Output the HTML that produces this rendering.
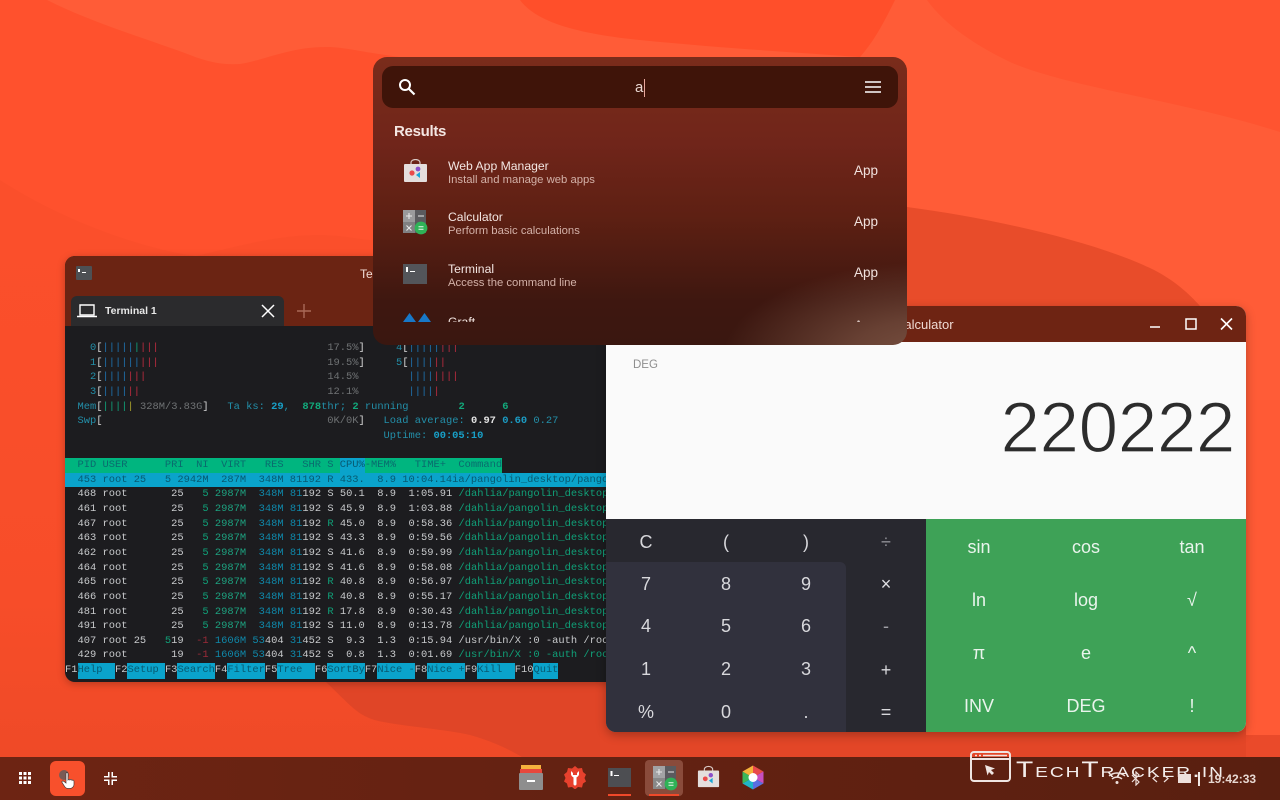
<!DOCTYPE html>
<html><head><meta charset="utf-8"><title>Desktop</title>
<style>
*{box-sizing:border-box}
html,body{margin:0;padding:0;width:1280px;height:800px;overflow:hidden;background:#ff512d}
body{position:relative;font-family:"Liberation Sans",sans-serif}
.a{position:absolute}
#term{left:65px;top:256px;width:560px;height:426px;border-radius:10px;overflow:hidden;background:#1c1c1f;box-shadow:0 2px 8px rgba(0,0,0,.25)}
#tbar{left:0;top:0;width:100%;height:70px;background:#6b2413}
#tab{left:6px;top:40px;width:213px;height:30px;background:#2b2b2d;border-radius:6px 6px 0 0}
#ht{left:0;top:85px;width:541px;height:341px;overflow:hidden;font:10.42px/14.65px "Liberation Mono",monospace;color:#c8cacc}
#ht div{height:14.65px;white-space:pre}
.g{color:#10a078}.b{color:#0f88aa}.d{color:#238fa9}.r{color:#b92c3e}.u{color:#1e70ad}.y{color:#a8a02c}.w{color:#d6d6d6}.k{color:#0a5f66}.m{color:#6f7274}.h{color:#18a0c8;font-weight:bold}.gb{color:#12a97b;font-weight:bold}.dr{color:#9c2b38}.n{color:#1da17f}
.ib{display:inline-block;height:14.65px;vertical-align:top}
.f{display:inline-block;background:#0aa3cb;color:#075a72;height:16px;line-height:15px;vertical-align:top}
#lau{left:373px;top:57px;width:534px;height:288px;border-radius:14px;overflow:hidden;color:#fff;
background:radial-gradient(ellipse 210px 95px at 560px 300px,#7a5242 0,rgba(122,82,66,.7) 40%,rgba(122,82,66,0) 100%),linear-gradient(180deg,#7a2c1b 0,#70251a 30%,#5e2013 55%,#3e1710 85%,#3a1710 100%)}
#sb{left:9px;top:9px;width:516px;height:42px;border-radius:11px;background:#3f1409}
.t1{font-size:12.2px;color:#f3e6e2;left:75px;white-space:nowrap}
.t2{font-size:11.3px;color:#d3b1a8;left:75px;white-space:nowrap}
.app{left:481px;font-size:13.5px;color:#f1e2de}
#calc{left:606px;top:306px;width:640px;height:426px;border-radius:10px;overflow:hidden;background:#fafafa;box-shadow:0 3px 10px rgba(0,0,0,.28)}
.ck{position:absolute;width:60px;margin-left:-30px;text-align:center;color:#d8d8dc;font-size:18px;line-height:20px}
.sk{position:absolute;width:80px;margin-left:-40px;text-align:center;color:#e9f4ec;font-size:18px;line-height:20px}
#bar{left:0;top:757px;width:1280px;height:43px;background:linear-gradient(90deg,#6d2413 0,#652212 40%,#591f10 100%)}
</style></head>
<body>
<svg class="a" style="left:0;top:0" width="1280" height="800" viewBox="0 0 1280 800">
<defs><linearGradient id="lg" x1="0" y1="240" x2="0" y2="757" gradientUnits="userSpaceOnUse"><stop offset="0" stop-color="#fb4f2b"/><stop offset=".7" stop-color="#f74d29"/><stop offset="1" stop-color="#ef4a27"/></linearGradient></defs>
<rect width="1280" height="800" fill="#ff512d"/>
<path d="M47 0C90 22 150 40 190 55C210 63 225 65 240 64C265 60 290 47 326 47C345 47 360 52 400 57V400H1280V0Z" fill="#ff5c37"/>
<path d="M520 0C535 20 570 33 640 40C720 48 790 52 860 57C875 40 885 20 895 0Z" fill="#ff4f2a"/>
<path d="M927 0C945 25 975 45 1010 62C1070 88 1180 100 1280 132V0Z" fill="#ff5430"/>
<path d="M907 207C990 218 1090 240 1150 268C1175 280 1190 295 1200 306V420H600V207Z" fill="#e84c2a"/>
<rect x="1246" y="400" width="34" height="360" fill="#ff5a35"/>
<path d="M0 180C70 225 150 250 196 256C240 245 280 235 318 235C345 235 360 240 373 240L700 420V760H0Z" fill="url(#lg)"/>
<rect x="600" y="420" width="646" height="340" fill="#e84c2a"/>
<path d="M326 682C345 700 355 712 367 717C380 725 440 728 470 735C495 742 510 750 522 757H640V682Z" fill="#e04527"/>
<rect x="600" y="700" width="646" height="60" fill="#e34627"/>
<rect x="1246" y="735" width="34" height="25" fill="#ea4a2a"/>
</svg>

<div class="a" id="term">
 <div class="a" id="tbar"></div>
 <svg class="a" style="left:11px;top:10px" width="16" height="14" viewBox="0 0 16 14"><rect width="16" height="14" rx="1" fill="#4d5054"/><path d="M2 3h2v3H2zM6 6h4v1H6z" fill="#fff"/></svg>
 <div class="a" style="left:295px;top:11px;font-size:12px;color:#f0dcd6">Terminal</div>
 <div class="a" id="tab">
  <svg class="a" style="left:5px;top:6px" width="22" height="18" viewBox="0 0 22 18"><path d="M4 3h14v10H4z" fill="none" stroke="#fff" stroke-width="1.4"/><path d="M1 14.500h20" stroke="#fff" stroke-width="1.600"/></svg>
  <div class="a" style="left:34px;top:9px;font-size:10.5px;font-weight:bold;color:#e8e8e8">Terminal 1</div>
  <svg class="a" style="left:190px;top:8px" width="14" height="14" viewBox="0 0 14 14"><path d="M1 1l12 12M13 1L1 13" stroke="#fff" stroke-width="1.5"/></svg>
 </div>
 <svg class="a" style="left:232px;top:48px" width="14" height="14" viewBox="0 0 14 14"><path d="M7 0v14M0 7h14" stroke="#a96a58" stroke-width="1.4"/></svg>

 <div class="a" id="ht"><div>    <span class="d">0</span><span class="w">[</span><span class="u">|||||</span><span class="g">|</span><span class="r">|||</span>                           <span class="m">17.5%</span><span class="w">]</span>     <span class="d">4</span><span class="w">[</span><span class="u">|||||</span><span class="r">|||</span></div><div>    <span class="d">1</span><span class="w">[</span><span class="u">||||||</span><span class="r">|||</span>                           <span class="m">19.5%</span><span class="w">]</span>     <span class="d">5</span><span class="w">[</span><span class="u">||||</span><span class="r">||</span></div><div>    <span class="d">2</span><span class="w">[</span><span class="u">||||</span><span class="r">|||</span>                             <span class="m">14.5%</span>        <span class="u">||||</span><span class="r">||||</span></div><div>    <span class="d">3</span><span class="w">[</span><span class="u">||||</span><span class="r">||</span>                              <span class="m">12.1%</span>        <span class="u">||||</span><span class="r">|</span></div><div>  <span class="d">Mem</span><span class="w">[</span><span class="g">||||</span><span class="y">|</span> <span class="m">328M/3.83G</span><span class="w">]</span>   <span class="d">Ta ks: </span><span class="h">29</span><span class="d">, </span> <span class="gb">878</span><span class="d">thr; </span><span class="gb">2</span> <span class="d">running</span>        <span class="gb">2</span>      <span class="gb">6</span></div><div>  <span class="d">Swp</span><span class="w">[</span>                                    <span class="m">0K/0K</span><span class="w">]</span>   <span class="d">Load average: </span><b style="color:#e2e2e2">0.97</b> <b style="color:#1b9cc4">0.60</b> <span class="d">0.27</span></div><div>                                                   <span class="d">Uptime: </span><b style="color:#18a0c8">00:05:10</b></div><div> </div><div style="width:437px;background:#00b57f;color:#0a6a6e">  PID USER      PRI  NI  VIRT   RES   SHR S <span class="ib" style="background:#0aa3cb;color:#075a72">CPU%</span>-MEM%   TIME+  Command</div><div style="background:#0aa3cb;color:#075a72">  453 root 25   5 2942M  287M  348M 81192 R 433.  8.9 10:04.14ia/pangolin_desktop/pangolin</div><div>  468 root       25   <span class="g">5</span> <span class="n">2987M</span>  <span class="b">348M</span> <span class="b">81</span>192 S 50.1  8.9  1:05.91 <span class="g">/dahlia/pangolin_desktop/pan</span></div><div>  461 root       25   <span class="g">5</span> <span class="n">2987M</span>  <span class="b">348M</span> <span class="b">81</span>192 S 45.9  8.9  1:03.88 <span class="g">/dahlia/pangolin_desktop/pan</span></div><div>  467 root       25   <span class="g">5</span> <span class="n">2987M</span>  <span class="b">348M</span> <span class="b">81</span>192 <span class="g">R</span> 45.0  8.9  0:58.36 <span class="g">/dahlia/pangolin_desktop/pan</span></div><div>  463 root       25   <span class="g">5</span> <span class="n">2987M</span>  <span class="b">348M</span> <span class="b">81</span>192 S 43.3  8.9  0:59.56 <span class="g">/dahlia/pangolin_desktop/pan</span></div><div>  462 root       25   <span class="g">5</span> <span class="n">2987M</span>  <span class="b">348M</span> <span class="b">81</span>192 S 41.6  8.9  0:59.99 <span class="g">/dahlia/pangolin_desktop/pan</span></div><div>  464 root       25   <span class="g">5</span> <span class="n">2987M</span>  <span class="b">348M</span> <span class="b">81</span>192 S 41.6  8.9  0:58.08 <span class="g">/dahlia/pangolin_desktop/pan</span></div><div>  465 root       25   <span class="g">5</span> <span class="n">2987M</span>  <span class="b">348M</span> <span class="b">81</span>192 <span class="g">R</span> 40.8  8.9  0:56.97 <span class="g">/dahlia/pangolin_desktop/pan</span></div><div>  466 root       25   <span class="g">5</span> <span class="n">2987M</span>  <span class="b">348M</span> <span class="b">81</span>192 <span class="g">R</span> 40.8  8.9  0:55.17 <span class="g">/dahlia/pangolin_desktop/pan</span></div><div>  481 root       25   <span class="g">5</span> <span class="n">2987M</span>  <span class="b">348M</span> <span class="b">81</span>192 <span class="g">R</span> 17.8  8.9  0:30.43 <span class="g">/dahlia/pangolin_desktop/pan</span></div><div>  491 root       25   <span class="g">5</span> <span class="n">2987M</span>  <span class="b">348M</span> <span class="b">81</span>192 S 11.0  8.9  0:13.78 <span class="g">/dahlia/pangolin_desktop/pan</span></div><div>  407 root 25   <span class="g">5</span>19  <span class="dr">-1</span> <span class="b">1606M</span> <span class="b">53</span>404 <span class="b">31</span>452 S  9.3  1.3  0:15.94 /usr/bin/X :0 -auth /root/.X</div><div>  429 root       19  <span class="dr">-1</span> <span class="b">1606M</span> <span class="b">53</span>404 <span class="b">31</span>452 S  0.8  1.3  0:01.69 <span class="g">/usr/bin/X :0 -auth /root/.X</span></div><div>F1<span class="f">Help  </span>F2<span class="f">Setup </span>F3<span class="f">Search</span>F4<span class="f">Filter</span>F5<span class="f">Tree  </span>F6<span class="f">SortBy</span>F7<span class="f">Nice -</span>F8<span class="f">Nice +</span>F9<span class="f">Kill  </span>F10<span class="f">Quit</span></div></div>
</div>

<div class="a" id="calc">
 <div class="a" style="left:0;top:0;width:640px;height:36px;background:#6e2413"></div>
 <div class="a" style="left:289px;top:11px;font-size:13px;color:#efdad3">Calculator</div>
 <svg class="a" style="left:544px;top:11px" width="86" height="14" viewBox="0 0 86 14"><path d="M0 10h10" stroke="#fff" stroke-width="1.6"/><rect x="36" y="2" width="10" height="10" fill="none" stroke="#fff" stroke-width="1.5"/><path d="M71 1.500l11 11M82 1.500l-11 11" stroke="#fff" stroke-width="1.6"/></svg>
 <div class="a" style="left:27px;top:53px;font-size:11.5px;color:#8e8e8e">DEG</div>
 <div class="a" style="right:11px;top:80px;font-size:71px;line-height:86px;color:#2c2c2c;-webkit-text-stroke:1.3px #fafafa;letter-spacing:-.4px">220222</div>
 <div class="a" style="left:0;top:213px;width:320px;height:213px;background:#28282f"></div>
 <div class="a" style="left:0;top:256px;width:240px;height:170px;background:#31313d;border-radius:0 6px 0 0"></div>
 <div class="a" style="left:320px;top:213px;width:320px;height:213px;background:#3ea257"></div>
 <div class="ck" style="left:40px;top:226px">C</div><div class="ck" style="left:120px;top:226px">(</div><div class="ck" style="left:200px;top:226px">)</div><div class="ck" style="left:280px;top:226px;color:#8f8f96">÷</div>
 <div class="ck" style="left:40px;top:268px">7</div><div class="ck" style="left:120px;top:268px">8</div><div class="ck" style="left:200px;top:268px">9</div><div class="ck" style="left:280px;top:268px;color:#e0e0e4">×</div>
 <div class="ck" style="left:40px;top:310px">4</div><div class="ck" style="left:120px;top:310px">5</div><div class="ck" style="left:200px;top:310px">6</div><div class="ck" style="left:280px;top:310px;color:#a0a0a6">-</div>
 <div class="ck" style="left:40px;top:353px">1</div><div class="ck" style="left:120px;top:353px">2</div><div class="ck" style="left:200px;top:353px">3</div><div class="ck" style="left:280px;top:354px">+</div>
 <div class="ck" style="left:40px;top:396px">%</div><div class="ck" style="left:120px;top:396px">0</div><div class="ck" style="left:200px;top:396px">.</div><div class="ck" style="left:280px;top:396px">=</div>
 <div class="sk" style="left:373px;top:231px">sin</div><div class="sk" style="left:480px;top:231px">cos</div><div class="sk" style="left:586px;top:231px">tan</div>
 <div class="sk" style="left:373px;top:284px">ln</div><div class="sk" style="left:480px;top:284px">log</div><div class="sk" style="left:586px;top:284px">√</div>
 <div class="sk" style="left:373px;top:337px">π</div><div class="sk" style="left:480px;top:337px">e</div><div class="sk" style="left:586px;top:337px">^</div>
 <div class="sk" style="left:373px;top:390px">INV</div><div class="sk" style="left:480px;top:390px">DEG</div><div class="sk" style="left:586px;top:390px">!</div>
</div>

<div class="a" id="lau">
 <div class="a" id="sb">
  <svg class="a" style="left:15px;top:11px" width="20" height="20" viewBox="0 0 20 20"><circle cx="8" cy="8" r="5" fill="none" stroke="#fff" stroke-width="2"/><path d="M12 12l5.500 5.500" stroke="#fff" stroke-width="2.200"/></svg>
  <div class="a" style="left:253px;top:13px;font-size:15px;color:#e9d7d2">a</div>
  <div class="a" style="left:262px;top:13px;width:1px;height:18px;background:#e9a79c"></div>
  <svg class="a" style="left:482px;top:14px" width="18" height="14" viewBox="0 0 18 14"><path d="M1 2h16M1 7h16M1 12h16" stroke="#fff" stroke-width="1.6"/></svg>
 </div>
 <div class="a" style="left:21px;top:66px;font-size:15px;font-weight:bold;color:#f4e6e2;letter-spacing:-.3px">Results</div>

 <svg class="a" style="left:30px;top:102px" width="25" height="24" viewBox="0 0 25 24"><path d="M8 6V3.500a4.500 3 0 0 1 9 0V6" fill="none" stroke="#d8c8c4" stroke-width="1.200"/><rect x="1" y="5" width="23" height="18" rx="1" fill="#e4dedd"/><circle cx="9" cy="14" r="2.600" fill="#ea4a4a"/><circle cx="15" cy="10" r="2.400" fill="#8a4fc9"/><path d="M17 13v6l-4-3z" fill="#18a6d6"/></svg>
 <div class="a t1" style="top:102px">Web App Manager</div><div class="a t2" style="top:117px">Install and manage web apps</div><div class="a app" style="top:106px">App</div>

 <svg class="a" style="left:29px;top:152px" width="26" height="26" viewBox="0 0 26 26"><rect x="1" y="1" width="12" height="12" fill="#9a9a9c"/><rect x="13" y="1" width="11" height="12" fill="#5a5a5e"/><rect x="1" y="13" width="12" height="11" fill="#808082"/><rect x="13" y="13" width="11" height="11" fill="#5a5a5e"/><path d="M4 7h6M7 4v6M4.500 16.500l5 5M9.500 16.500l-5 5M16 7h6" stroke="#e8e8e8" stroke-width="1.100"/><circle cx="19" cy="19" r="6.400" fill="#2fb357"/><path d="M16.500 17.800h5M16.500 20.200h5" stroke="#e8f6ec" stroke-width="1"/></svg>
 <div class="a t1" style="top:153px">Calculator</div><div class="a t2" style="top:168px">Perform basic calculations</div><div class="a app" style="top:157px">App</div>

 <svg class="a" style="left:30px;top:207px" width="24" height="20" viewBox="0 0 24 20"><rect width="24" height="20" fill="#53555a"/><path d="M3 3h2v5H3zM7 7h5v1H7z" fill="#fff"/></svg>
 <div class="a t1" style="top:205px">Terminal</div><div class="a t2" style="top:220px">Access the command line</div><div class="a app" style="top:208px">App</div>

 <div class="a" style="left:0;top:240px;width:534px;height:25px;overflow:hidden">
  <svg class="a" style="left:30px;top:16px" width="28" height="9" viewBox="0 0 28 9"><path d="M0 9L6.500 0 13 9zM15 9L21.500 0 28 9z" fill="#1878c8"/></svg>
  <div class="a t1" style="top:18px">Graft</div><div class="a app" style="top:21px">App</div>
 </div>
</div>

<div class="a" id="bar"></div>
<svg class="a" style="left:18px;top:771px" width="14" height="14" viewBox="0 0 14 14" fill="#fff"><path d="M1 1h3v3H1zM5.500 1h3v3h-3zM10 1h3v3h-3zM1 5.500h3v3H1zM5.500 5.500h3v3h-3zM10 5.500h3v3h-3zM1 10h3v3H1zM5.500 10h3v3h-3zM10 10h3v3h-3z"/></svg>
<div class="a" style="left:50px;top:761px;width:35px;height:35px;border-radius:6px;background:#f8502c"></div>
<svg class="a" style="left:58px;top:769px" width="22" height="22" viewBox="0 0 22 22"><circle cx="6" cy="6" r="5" fill="#7a5a55"/><path d="M8 5c0-2 2-2 2 0v6c1-1 2-1 2 0 1-1 2-1 2 .5 1-.8 2-.4 2 1v3c0 2-2 4-4 4h-2c-2 0-3-1-4-3l-2-3c-.5-1.400 1-2 2-1l2 1.500z" fill="#fff" stroke="#4a3a38" stroke-width=".7"/></svg>
<svg class="a" style="left:104px;top:772px" width="13" height="13" viewBox="0 0 13 13"><path d="M4 0h1.500v5.500H0V4h4zM7.500 0H9v4h4v1.500H7.500zM0 7.500h5.500V13H4V9H0zM7.500 7.500H13V9H9v4H7.500z" fill="#fff"/></svg>

<svg class="a" style="left:519px;top:765px" width="24" height="25" viewBox="0 0 24 25"><rect x="2" y="0" width="20" height="5" fill="#f6b13d"/><rect x="1" y="4" width="22" height="5" fill="#e8483c"/><rect y="8" width="24" height="17" rx="1" fill="#8e8e8e"/><rect x="8" y="15" width="8" height="2" fill="#fff"/></svg>
<svg class="a" style="left:563px;top:765px" width="24" height="24" viewBox="0 0 24 24"><path d="M12 1l3 2.500 4-.5 1 4 3 2.500-1.500 3.500 1.500 3.500-3 2-1 4-4-.5-3 2.500-3-2.500-4 .5-1-4-3-2 1.500-3.500L1 9.500l3-2.500 1-4 4 .5z" fill="#e8412d"/><path d="M8 6v3c0 2 2 3 2.500 3.500V19c0 2 3 2 3 0v-6.500C14 12 16 11 16 9V6l-2 2v2h-4V8z" fill="#fff"/></svg>
<svg class="a" style="left:608px;top:768px" width="23" height="19" viewBox="0 0 23 19"><rect width="23" height="19" fill="#4d4e52"/><path d="M2.500 3h2v5h-2zM6 7h5v1H6z" fill="#fff"/></svg>
<div class="a" style="left:608px;top:794px;width:23px;height:2px;background:#f0492a"></div>
<div class="a" style="left:645px;top:760px;width:38px;height:36px;border-radius:4px;background:#8a4b3b"></div>
<svg class="a" style="left:652px;top:765px" width="26" height="26" viewBox="0 0 26 26"><rect x="1" y="1" width="12" height="12" fill="#a2a2a4"/><rect x="13" y="1" width="11" height="12" fill="#5a5a5e"/><rect x="1" y="13" width="12" height="11" fill="#888"/><rect x="13" y="13" width="11" height="11" fill="#5a5a5e"/><path d="M4 7h6M7 4v6M4.500 16.500l5 5M9.500 16.500l-5 5M16 7h6" stroke="#e8e8e8" stroke-width="1.100"/><circle cx="19" cy="19" r="6.400" fill="#2fb357"/><path d="M16.500 17.800h5M16.500 20.200h5" stroke="#e8f6ec" stroke-width="1"/></svg>
<div class="a" style="left:649px;top:794px;width:30px;height:2px;background:#f0492a"></div>
<svg class="a" style="left:697px;top:765px" width="23" height="24" viewBox="0 0 25 24"><path d="M8 6V3.500a4.500 3 0 0 1 9 0V6" fill="none" stroke="#d8c8c4" stroke-width="1.200"/><rect x="1" y="5" width="23" height="18" rx="1" fill="#e4dedd"/><circle cx="9" cy="14" r="2.600" fill="#ea4a4a"/><circle cx="15" cy="10" r="2.400" fill="#8a4fc9"/><path d="M17 13v6l-4-3z" fill="#18a6d6"/></svg>
<svg class="a" style="left:741px;top:765px" width="24" height="25" viewBox="0 0 24 25"><path d="M12 0.500L22.500 6.500 12 12.500z" fill="#e84a4a"/><path d="M22.500 6.500V18.500L12 12.500z" fill="#c84fc0"/><path d="M22.500 18.500L12 24.500V12.500z" fill="#5a6fe0"/><path d="M12 24.500L1.500 18.500 12 12.500z" fill="#20b5c8"/><path d="M1.500 18.500V6.500L12 12.500z" fill="#3bb85a"/><path d="M1.500 6.500L12 0.500V12.500z" fill="#f5b23a"/><circle cx="12" cy="12.500" r="4.500" fill="#fff"/></svg>

<svg class="a" style="left:970px;top:750px" width="42" height="32" viewBox="0 0 42 32"><rect x="1" y="2" width="39" height="29" rx="3" fill="none" stroke="#efe5e2" stroke-width="2"/><path d="M2 9h37" stroke="#efe5e2" stroke-width="2"/><path d="M5 5.500h2M9 5.500h2M13 5.500h24" stroke="#efe5e2" stroke-width="1.500"/><path d="M15 15l10 3.500-4 1.500 3 3-2 2-3-3-1.500 3.500z" fill="#efe5e2"/></svg>
<div class="a" style="left:1016px;top:755px;font-size:22px;line-height:30px;font-variant:small-caps;color:#f4eeec;letter-spacing:1.500px;white-space:nowrap;transform:scaleX(1.28);transform-origin:0 0">TechTracker.in</div>

<svg class="a" style="left:1107px;top:771px" width="90" height="15" viewBox="0 0 90 15" fill="none" stroke="#eee0dc"><path d="M2 5c5-4 11-4 16 0M5 8c3-2.500 7-2.500 10 0" stroke-width="1.400"/><circle cx="10" cy="11.500" r="1.500" fill="#eee0dc" stroke="none"/><path d="M25 4l7 7-3 3V1l3 3-7 7" stroke-width="1.200"/><path d="M50 4l-4 3.500 4 3.500M57 4l4 3.500-4 3.500" stroke-width="1.200"/><rect x="71" y="3" width="13" height="9" fill="#eee0dc" stroke="none"/></svg>
<div class="a" style="left:1198px;top:772px;width:2px;height:14px;background:#f0e6e2"></div>
<div class="a" style="left:1208px;top:772px;font-size:12px;font-weight:bold;color:#e8d8d2">19:42:33</div>
</body></html>
